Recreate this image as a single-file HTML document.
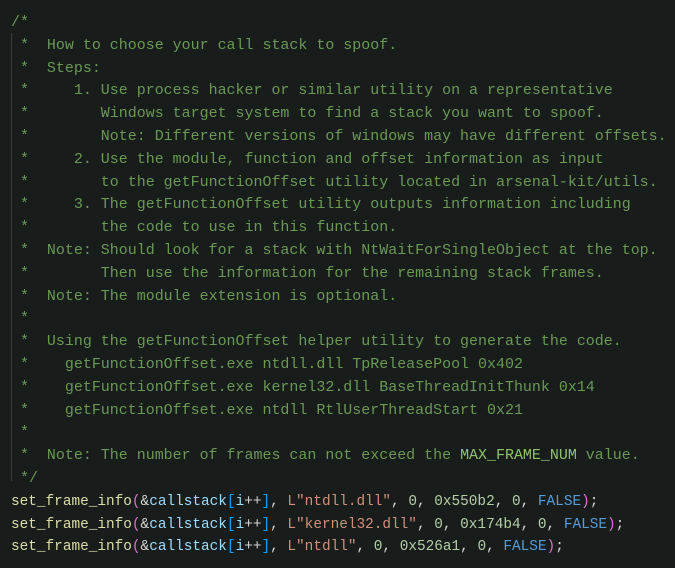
<!DOCTYPE html>
<html><head><style>
html,body{margin:0;padding:0;background:#181d1b;width:675px;height:568px;overflow:hidden}
pre{position:absolute;left:11px;margin:0;font-family:"Liberation Mono",monospace;font-size:14.4px;line-height:22.8px;color:#6a9955}
#c{top:12px;transform:scaleX(1.04);transform-origin:0 0}
#k{top:490.8px}
.g{position:absolute;left:11px;top:33px;width:1px;height:448px;background:#3a3f3c}
.f{color:#dcdcaa}.p{color:#da70d6}.v{color:#9cdcfe}.b{color:#179fff}.s{color:#ce9178}.n{color:#b5cea8}.k{color:#569cd6}.w{color:#d4d4d4}.m{color:#8fc36b}
</style></head><body><div class="g"></div><pre id="c">/*
 *  How to choose your call stack to spoof.
 *  Steps:
 *     1. Use process hacker or similar utility on a representative
 *        Windows target system to find a stack you want to spoof.
 *        Note: Different versions of windows may have different offsets.
 *     2. Use the module, function and offset information as input
 *        to the getFunctionOffset utility located in arsenal-kit/utils.
 *     3. The getFunctionOffset utility outputs information including
 *        the code to use in this function.
 *  Note: Should look for a stack with NtWaitForSingleObject at the top.
 *        Then use the information for the remaining stack frames.
 *  Note: The module extension is optional.
 *
 *  Using the getFunctionOffset helper utility to generate the code.
 *    getFunctionOffset.exe ntdll.dll TpReleasePool 0x402
 *    getFunctionOffset.exe kernel32.dll BaseThreadInitThunk 0x14
 *    getFunctionOffset.exe ntdll RtlUserThreadStart 0x21
 *
 *  Note: The number of frames can not exceed the <span class="m">MAX_FRAME_NUM</span> value.
 */</pre><pre id="k"><span class="f">set_frame_info</span><span class="p">(</span><span class="w">&amp;</span><span class="v">callstack</span><span class="b">[</span><span class="v">i</span><span class="w">++</span><span class="b">]</span><span class="w">, </span><span class="s">L"ntdll.dll"</span><span class="w">, </span><span class="n">0</span><span class="w">, </span><span class="n">0x550b2</span><span class="w">, </span><span class="n">0</span><span class="w">, </span><span class="k">FALSE</span><span class="p">)</span><span class="w">;</span>
<span class="f">set_frame_info</span><span class="p">(</span><span class="w">&amp;</span><span class="v">callstack</span><span class="b">[</span><span class="v">i</span><span class="w">++</span><span class="b">]</span><span class="w">, </span><span class="s">L"kernel32.dll"</span><span class="w">, </span><span class="n">0</span><span class="w">, </span><span class="n">0x174b4</span><span class="w">, </span><span class="n">0</span><span class="w">, </span><span class="k">FALSE</span><span class="p">)</span><span class="w">;</span>
<span class="f">set_frame_info</span><span class="p">(</span><span class="w">&amp;</span><span class="v">callstack</span><span class="b">[</span><span class="v">i</span><span class="w">++</span><span class="b">]</span><span class="w">, </span><span class="s">L"ntdll"</span><span class="w">, </span><span class="n">0</span><span class="w">, </span><span class="n">0x526a1</span><span class="w">, </span><span class="n">0</span><span class="w">, </span><span class="k">FALSE</span><span class="p">)</span><span class="w">;</span></pre></body></html>
